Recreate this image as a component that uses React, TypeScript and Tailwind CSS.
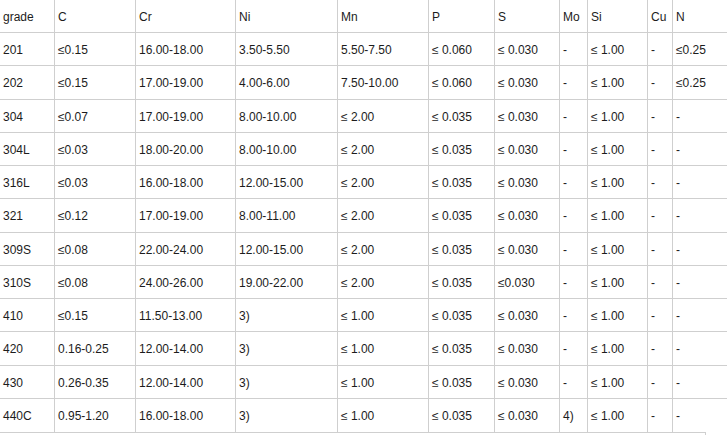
const head = ['grade', 'C', 'Cr', 'Ni', 'Mn', 'P', 'S', 'Mo', 'Si', 'Cu', 'N'];

const rows: string[][] = [
  ['201', '≤0.15', '16.00-18.00', '3.50-5.50', '5.50-7.50', '≤ 0.060', '≤ 0.030', '-', '≤ 1.00', '-', '≤0.25'],
  ['202', '≤0.15', '17.00-19.00', '4.00-6.00', '7.50-10.00', '≤ 0.060', '≤ 0.030', '-', '≤ 1.00', '-', '≤0.25'],
  ['304', '≤0.07', '17.00-19.00', '8.00-10.00', '≤ 2.00', '≤ 0.035', '≤ 0.030', '-', '≤ 1.00', '-', '-'],
  ['304L', '≤0.03', '18.00-20.00', '8.00-10.00', '≤ 2.00', '≤ 0.035', '≤ 0.030', '-', '≤ 1.00', '-', '-'],
  ['316L', '≤0.03', '16.00-18.00', '12.00-15.00', '≤ 2.00', '≤ 0.035', '≤ 0.030', '-', '≤ 1.00', '-', '-'],
  ['321', '≤0.12', '17.00-19.00', '8.00-11.00', '≤ 2.00', '≤ 0.035', '≤ 0.030', '-', '≤ 1.00', '-', '-'],
  ['309S', '≤0.08', '22.00-24.00', '12.00-15.00', '≤ 2.00', '≤ 0.035', '≤ 0.030', '-', '≤ 1.00', '-', '-'],
  ['310S', '≤0.08', '24.00-26.00', '19.00-22.00', '≤ 2.00', '≤ 0.035', '≤0.030', '-', '≤ 1.00', '-', '-'],
  ['410', '≤0.15', '11.50-13.00', '3)', '≤ 1.00', '≤ 0.035', '≤ 0.030', '-', '≤ 1.00', '-', '-'],
  ['420', '0.16-0.25', '12.00-14.00', '3)', '≤ 1.00', '≤ 0.035', '≤ 0.030', '-', '≤ 1.00', '-', '-'],
  ['430', '0.26-0.35', '12.00-14.00', '3)', '≤ 1.00', '≤ 0.035', '≤ 0.030', '-', '≤ 1.00', '-', '-'],
  ['440C', '0.95-1.20', '16.00-18.00', '3)', '≤ 1.00', '≤ 0.035', '≤ 0.030', '4)', '≤ 1.00', '-', '-'],
];

function Cell({ text, last, bottom }: { text: string; last: boolean; bottom: boolean }) {
  return (
    <div
      className={`flex items-center pl-[3px] pt-[2px] whitespace-nowrap border-[#cfcfcf] ${last ? '' : 'border-r'} ${bottom ? '' : 'border-b'}`}
    >
      {text}
    </div>
  );
}

export default function App() {
  return (
    <div className="w-[727px] h-[435px] bg-white overflow-hidden text-[12px] text-[#1c1c1c] font-['Liberation_Sans',Arial,sans-serif]">
      <div className="grid grid-cols-[55px_81px_100px_102px_91px_66px_65px_28px_60px_25px_1fr] grid-rows-[33px] auto-rows-[33.25px]">
        {head.map((h, i) => (
          <Cell key={'h' + i} text={h} last={i === head.length - 1} bottom={false} />
        ))}
        {rows.map((r, ri) =>
          r.map((c, ci) => (
            <Cell key={ri + '-' + ci} text={c} last={ci === r.length - 1} bottom={ri === rows.length - 1} />
          ))
        )}
      </div>
      <div className="w-[706px] h-[3px] border-t border-r border-[#cfcfcf]" />
    </div>
  );
}
